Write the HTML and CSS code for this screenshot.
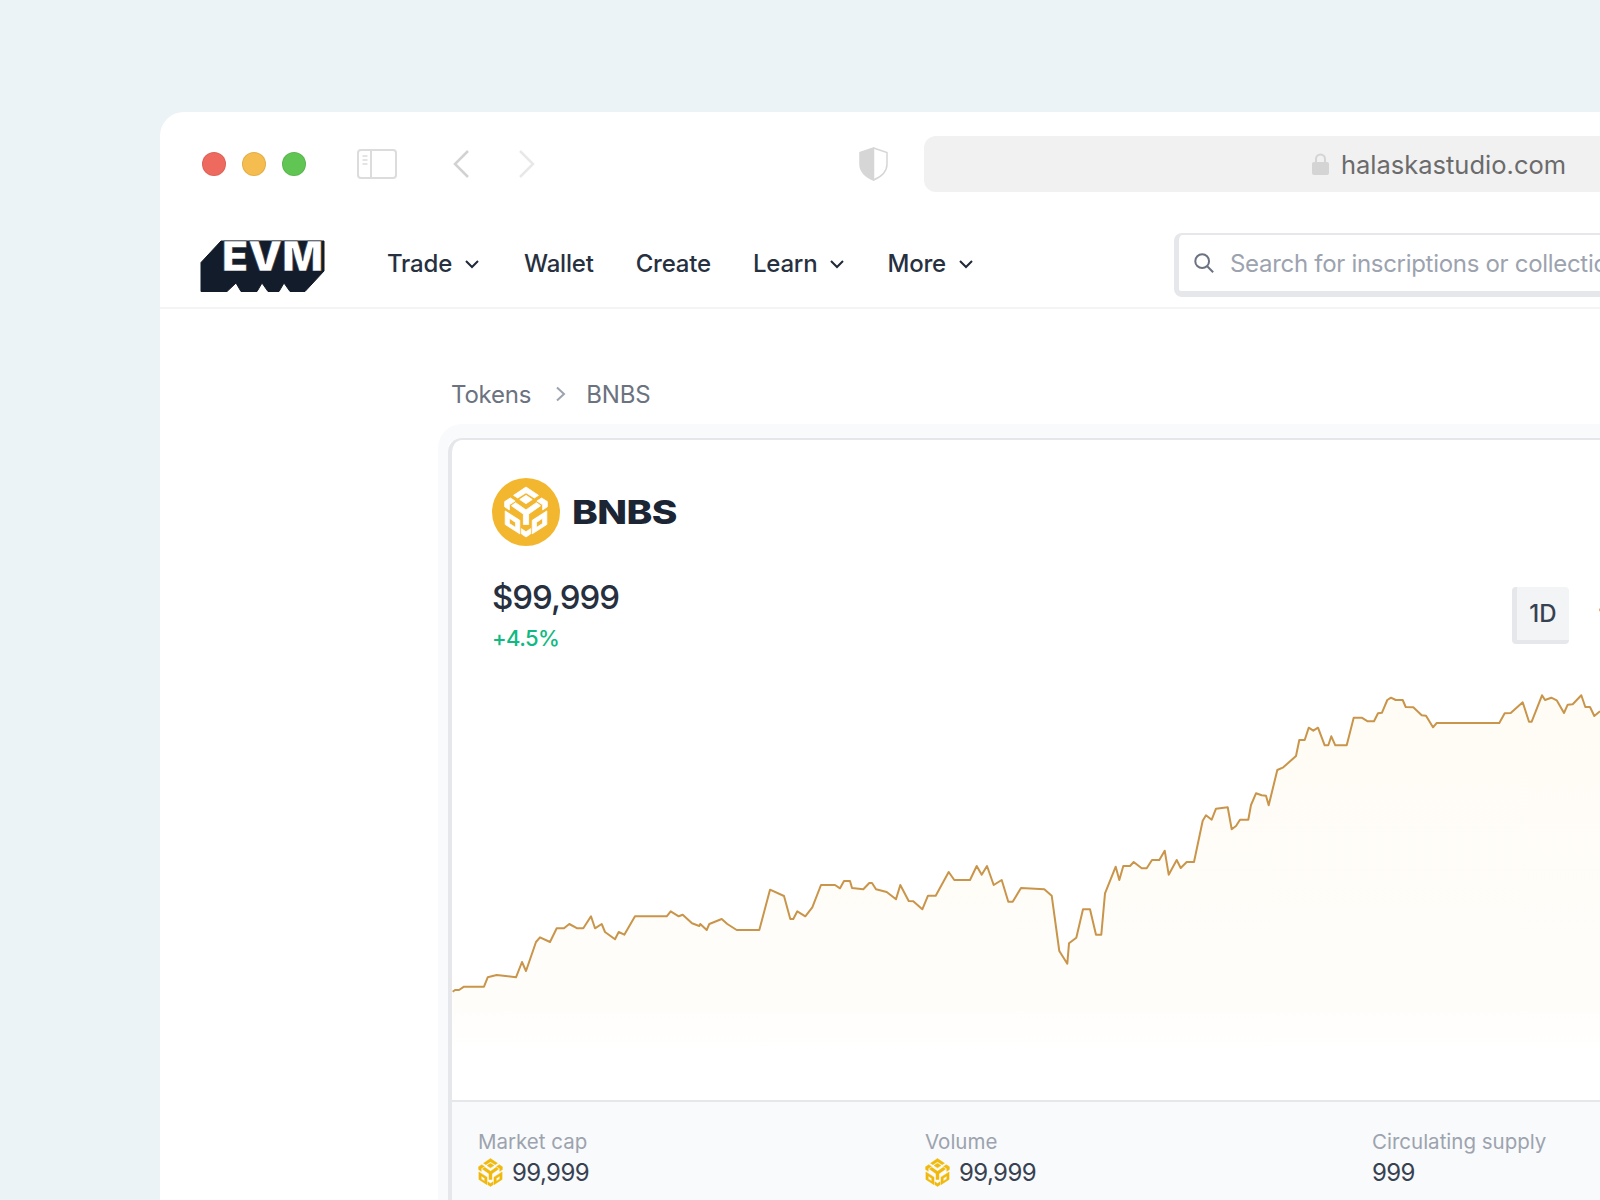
FILE: index.html
```html
<!DOCTYPE HTML>
<html>

<head>
<meta charset="utf-8">
<title>BNBS</title>

<link rel="stylesheet" href="styles.css">
</head>

<body>

<svg class="defs" width="0" height="0">
  <symbol id="bnb-glyph" viewBox="13 8 42 50">
    <path d="M34 9l12 8-4 2.500-8-5-8 5-4-2.500z"/>
    <path d="M34 17l6 4-6 4-6-4z"/>
    <path d="M19 19.500l4.500 3-5.500 3.500v5l-4.500-3v-5z"/>
    <path d="M49 19.500l-4.500 3 5.500 3.500v5l4.500-3v-5z"/>
    <path d="M24 24l10 7 10-7 4 3-11.500 8v10h-5v-10l-11.500-8z"/>
    <path fill-rule="evenodd" d="M14 32l14 9v13l-14-9zM18 39v5l6 4v-5z"/>
    <path fill-rule="evenodd" d="M54 32l-14 9v13l14-9zM50 39v5l-6 4v-5z"/>
    <path d="M29.500 49l4.500 3 4.500-3v5l-4.500 3-4.500-3z"/>
  </symbol>
</svg>

<div class="window">

  <div class="toolbar">
    <span class="light red"></span>
    <span class="light yellow"></span>
    <span class="light green"></span>

    <svg class="sidebar-icon" width="40" height="30" viewBox="0 0 40 30" fill="none" stroke="#dcdcdc" stroke-width="2">
      <rect x="1" y="1" width="38" height="28" rx="3"/>
      <path d="M14 1v28"/>
      <path d="M5.500 7h5M5.500 11h5M5.500 15h5" stroke-width="1.500"/>
    </svg>

    <svg class="back-icon" width="16" height="28" viewBox="0 0 16 28" fill="none" stroke="#d2d2d2" stroke-width="2.500">
      <path d="M15 1L2 14l13 13"/>
    </svg>
    <svg class="forward-icon" width="16" height="28" viewBox="0 0 16 28" fill="none" stroke="#e8e8e8" stroke-width="2.500">
      <path d="M1 1l13 13L1 27"/>
    </svg>

    <svg class="shield-icon" width="29" height="34" viewBox="0 0 29 34">
      <path d="M14.500 1L1 5.500V17c0 7 5 12.500 13.500 16z" fill="#d6d6d6" stroke="#d6d6d6" stroke-width="1.500"/>
      <path d="M14.500 1L28 5.500V17c0 7-5 12.500-13.500 16" fill="none" stroke="#d6d6d6" stroke-width="1.500"/>
    </svg>

    <div class="url-bar">
      <svg width="17" height="22" viewBox="0 0 17 22">
        <rect x="0" y="9" width="17" height="13" rx="2" fill="#d4d4d4"/>
        <path d="M4 10V6a4.500 4.500 0 0 1 9 0v4" fill="none" stroke="#d4d4d4" stroke-width="2"/>
      </svg>
      <span>halaskastudio.com</span>
    </div>
  </div>

  <div class="nav">
    <svg class="logo" width="126" height="53" viewBox="0 0 126 53">
      <path d="M1 22.500L21 1h103v30l-19 20.500H90l-6-8.500-5 8.500H68l-6-8.500-5 8.500H41l-5-8.500-9 8.500H1z" fill="#131c2b" stroke="#131c2b" stroke-linejoin="round"/>
      <text class="logo-text" x="22" y="30.500" textLength="101" lengthAdjust="spacingAndGlyphs">EVM</text>
    </svg>

    <div class="nav-item trade">Trade
      <svg width="16" height="10" viewBox="0 0 16 10" fill="none" stroke="#1f2937" stroke-width="2"><path d="M2 2l6 6 6-6"/></svg>
    </div>
    <div class="nav-item">Wallet</div>
    <div class="nav-item">Create</div>
    <div class="nav-item">Learn
      <svg width="16" height="10" viewBox="0 0 16 10" fill="none" stroke="#1f2937" stroke-width="2"><path d="M2 2l6 6 6-6"/></svg>
    </div>
    <div class="nav-item">More
      <svg width="16" height="10" viewBox="0 0 16 10" fill="none" stroke="#1f2937" stroke-width="2"><path d="M2 2l6 6 6-6"/></svg>
    </div>

    <div class="search">
      <svg width="22" height="22" viewBox="0 0 24 24" fill="none" stroke="#6b7280" stroke-width="2.200">
        <circle cx="10" cy="10" r="7.500"/>
        <path d="M15.500 15.500l6.500 6.500"/>
      </svg>
      <span>Search for inscriptions or collections</span>
    </div>
  </div>

  <div class="content">
    <div class="crumbs">
      <span>Tokens</span>
      <svg width="12" height="16" viewBox="0 0 12 16" fill="none" stroke="#9ca3af" stroke-width="2"><path d="M2 1.500L9 8l-7 6.500"/></svg>
      <span>BNBS</span>
    </div>

    <div class="card-halo">
      <div class="card">
        <div class="token">
          <span class="token-logo">
            <svg width="44" height="52"><use href="#bnb-glyph"/></svg>
          </span>
          <span class="token-name">BNBS</span>
        </div>

        <div class="price-row">
          <div>
            <div class="price">$99,999</div>
            <div class="change">+4.5%</div>
          </div>
          <div class="ranges">
            <button type="button" class="range active">1D</button>
            <button type="button" class="range">1W</button>
          </div>
        </div>

        <svg class="chart" width="1148" height="440" viewBox="452 660 1148 440">
          <defs>
            <linearGradient id="chart-fill" gradientUnits="userSpaceOnUse" x1="0" y1="695" x2="0" y2="1055">
              <stop offset="0" stop-color="#fffcf5"/>
              <stop offset="0.85" stop-color="#fffdfa"/>
              <stop offset="1" stop-color="#ffffff"/>
            </linearGradient>
          </defs>
          <polygon fill="url(#chart-fill)" points="452,1100 452.700,991.700 455,990 459,990 464,986.700 484,986.700 487.700,977.300 496.700,975 516,977.300 522,962 526,971 536,942 540,937.300 550,942 556.700,928.300 564,928.300 569.300,924 577.300,928.300 583.300,928.300 591,916.300 595,928.300 601.700,924 605,932 615,939.300 618.700,932 624.300,934.700 635,916.300 666.700,916.300 670.700,911.300 678.700,916.300 682.700,914.700 692,923.300 699.300,926 700.300,924 706.700,930 709.300,924 721.700,919 727.300,924 736.700,930 759.300,930 770,889.700 784,896 790.300,919 793.300,919 797.300,911.300 805.300,916.300 812.300,907.300 821,885 835,885 840,888.300 844,881 850,881 852,888 863.300,889.300 869.300,883 872,883 876,889.300 886.700,892 896,899.300 900.300,885 908.700,901 913.300,901.300 922.300,909.300 928,895.700 935.700,895.700 948.700,872 954.300,880 970,880 976.700,866 981.700,874.700 987,866 993.700,885 1001.700,880 1008.300,901.700 1012.700,901.700 1021,888 1044.300,889.300 1051.700,895.700 1059.300,951 1067.300,963.700 1069,943.300 1076.300,937.700 1083,909.300 1090,909.300 1096,934.700 1101.300,934.700 1105,893.300 1115.700,866.700 1119.300,880 1123.300,866 1130,866 1133.700,862 1141.700,868.300 1146.700,868.300 1152,860 1159.300,860 1164.700,850.700 1168.700,874.700 1176.700,860 1180.700,868 1186.700,862 1194,862 1202.700,820.700 1206,815.300 1211.700,819.700 1216,808.700 1227.700,807.300 1231.700,829.300 1236,826 1240,819.700 1248.300,819.700 1251,805 1256,793.300 1261.700,795.300 1266,795.700 1268.700,805.300 1277.300,770 1283.300,767.300 1296,756 1299.300,740 1304.700,740 1308.700,727.700 1313.300,730.700 1318,727.700 1324.700,745.300 1328.300,745.300 1331.300,736.300 1335.300,745.300 1346.700,745.300 1353.700,717.700 1361.700,717.700 1367.700,721.300 1374,721.300 1378,713.300 1382,712.700 1387.300,700 1391,697.700 1395.700,700 1402.700,700 1405.700,707 1413.300,707.300 1421.700,715.300 1426,715.700 1433,727.300 1436.700,723 1499.300,723 1504.700,713.300 1510.700,713 1522.700,702.300 1529,721.700 1531.700,721.700 1542,695.300 1545,700 1551.300,697.700 1556.700,700.300 1564,713 1567.700,704.700 1572.700,704.300 1581.300,695.300 1585.300,707 1590,707 1594.300,716 1600,711.300 1600,1100"/>
          <polyline fill="none" stroke="#c9954a" stroke-width="2" stroke-linejoin="round" points="452.700,991.700 455,990 459,990 464,986.700 484,986.700 487.700,977.300 496.700,975 516,977.300 522,962 526,971 536,942 540,937.300 550,942 556.700,928.300 564,928.300 569.300,924 577.300,928.300 583.300,928.300 591,916.300 595,928.300 601.700,924 605,932 615,939.300 618.700,932 624.300,934.700 635,916.300 666.700,916.300 670.700,911.300 678.700,916.300 682.700,914.700 692,923.300 699.300,926 700.300,924 706.700,930 709.300,924 721.700,919 727.300,924 736.700,930 759.300,930 770,889.700 784,896 790.300,919 793.300,919 797.300,911.300 805.300,916.300 812.300,907.300 821,885 835,885 840,888.300 844,881 850,881 852,888 863.300,889.300 869.300,883 872,883 876,889.300 886.700,892 896,899.300 900.300,885 908.700,901 913.300,901.300 922.300,909.300 928,895.700 935.700,895.700 948.700,872 954.300,880 970,880 976.700,866 981.700,874.700 987,866 993.700,885 1001.700,880 1008.300,901.700 1012.700,901.700 1021,888 1044.300,889.300 1051.700,895.700 1059.300,951 1067.300,963.700 1069,943.300 1076.300,937.700 1083,909.300 1090,909.300 1096,934.700 1101.300,934.700 1105,893.300 1115.700,866.700 1119.300,880 1123.300,866 1130,866 1133.700,862 1141.700,868.300 1146.700,868.300 1152,860 1159.300,860 1164.700,850.700 1168.700,874.700 1176.700,860 1180.700,868 1186.700,862 1194,862 1202.700,820.700 1206,815.300 1211.700,819.700 1216,808.700 1227.700,807.300 1231.700,829.300 1236,826 1240,819.700 1248.300,819.700 1251,805 1256,793.300 1261.700,795.300 1266,795.700 1268.700,805.300 1277.300,770 1283.300,767.300 1296,756 1299.300,740 1304.700,740 1308.700,727.700 1313.300,730.700 1318,727.700 1324.700,745.300 1328.300,745.300 1331.300,736.300 1335.300,745.300 1346.700,745.300 1353.700,717.700 1361.700,717.700 1367.700,721.300 1374,721.300 1378,713.300 1382,712.700 1387.300,700 1391,697.700 1395.700,700 1402.700,700 1405.700,707 1413.300,707.300 1421.700,715.300 1426,715.700 1433,727.300 1436.700,723 1499.300,723 1504.700,713.300 1510.700,713 1522.700,702.300 1529,721.700 1531.700,721.700 1542,695.300 1545,700 1551.300,697.700 1556.700,700.300 1564,713 1567.700,704.700 1572.700,704.300 1581.300,695.300 1585.300,707 1590,707 1594.300,716 1600,711.300"/>
        </svg>

        <div class="stats">
          <div class="stat">
            <div class="stat-label">Market cap</div>
            <div class="stat-value"><svg class="coin" width="25" height="29"><use href="#bnb-glyph"/></svg>99,999</div>
          </div>
          <div class="stat">
            <div class="stat-label">Volume</div>
            <div class="stat-value"><svg class="coin" width="25" height="29"><use href="#bnb-glyph"/></svg>99,999</div>
          </div>
          <div class="stat">
            <div class="stat-label">Circulating supply</div>
            <div class="stat-value">999</div>
          </div>
        </div>
      </div>
    </div>
  </div>

</div>

</body>
</html>
```

FILE: styles.css
```css
* {
  box-sizing: border-box;
}

body {
  margin: 0;
  height: 1200px;
  overflow: hidden;
  background-color: #ebf3f6;
  font-family: Inter, "Liberation Sans", sans-serif;
  color: #27303f;
}

svg {
  flex: none;
}

.defs {
  position: absolute;
}

.window {
  width: 1600px;
  height: 1088px;
  margin: 112px 0 0 160px;
  background-color: #fff;
  border-radius: 24px 0 0 0;
  overflow: hidden;
}

/* browser bar */

.toolbar {
  display: flex;
  align-items: center;
  height: 104px;
  padding-left: 42px;
}

.light {
  flex: none;
  width: 24px;
  height: 24px;
  margin-right: 16px;
  border-radius: 50%;
  border: 1px solid rgba(0, 0, 0, .08);
}

.red {
  background-color: #ee6a5f;
}

.yellow {
  background-color: #f5bd4f;
}

.green {
  background-color: #61c554;
}

.sidebar-icon {
  margin-left: 35px;
}

.back-icon {
  margin-left: 56px;
}

.forward-icon {
  margin-left: 50px;
}

.shield-icon {
  margin-left: 324px;
}

.url-bar {
  display: flex;
  align-items: center;
  justify-content: center;
  gap: 12px;
  flex: none;
  width: 1030px;
  height: 56px;
  margin-left: 36px;
  background-color: #f1f1f1;
  border-radius: 12px;
  font-size: 25.500px;
  color: #6b6b6b;
}

/* site nav */

.nav {
  display: flex;
  align-items: center;
  height: 93px;
  padding: 4px 0 0 40px;
  border-bottom: 2px solid #f3f4f6;
}

.logo {
  margin: 5px 61px 0 0;
  overflow: visible;
}

.logo-text {
  font-size: 41px;
  font-weight: 900;
  fill: #fff;
  stroke: #131c2b;
  stroke-width: .5px;
}

.nav-item {
  display: flex;
  align-items: center;
  gap: 12px;
  flex: none;
  margin-right: 42px;
  font-size: 24px;
  font-weight: 500;
  letter-spacing: -.2px;
}

.trade {
  margin-right: 44px;
}

.search {
  display: flex;
  align-items: center;
  gap: 15px;
  flex: none;
  width: 600px;
  height: 64px;
  margin: 3px 0 0 158px;
  padding-left: 14px;
  border: 2px solid #e5e7eb;
  border-left-width: 5px;
  border-bottom-width: 6px;
  border-right: 0;
  border-radius: 8px 0 0 8px;
  font-size: 24px;
  letter-spacing: -.3px;
  color: #9ca3af;
  white-space: nowrap;
}

/* page */

.content {
  padding: 70px 0 0 278px;
}

.crumbs {
  display: flex;
  align-items: center;
  gap: 22px;
  height: 30px;
  padding-left: 13px;
  font-size: 24px;
  letter-spacing: -.2px;
  color: #6b7280;
}

.crumbs svg {
  margin: 0 -3px 0 2px;
}

.card-halo {
  width: 1206px;
  margin-top: 15px;
  border: 10px solid #f9fafb;
  border-top-width: 14px;
  border-right: 0;
  border-radius: 24px 0 0 0;
}

.card {
  border-left: 4px solid #e5e7eb;
  border-top: 2px solid #e5e7eb;
  border-radius: 14px 0 0 0;
  background-color: #fff;
}

.token {
  display: flex;
  align-items: center;
  gap: 12px;
  padding: 38px 0 0 40px;
}

.token-logo {
  display: flex;
  align-items: center;
  justify-content: center;
  width: 68px;
  height: 68px;
  border-radius: 50%;
  background-color: #f3b72f;
  fill: #fff;
  stroke: #fff;
  stroke-width: .8px;
}

.token-name {
  font-size: 33px;
  font-weight: 800;
  letter-spacing: -.5px;
  color: #1b2533;
  transform: scaleX(1.18);
  transform-origin: left center;
}

.price-row {
  display: flex;
  justify-content: space-between;
  height: 114px;
  padding: 30px 0 0 40px;
}

.price {
  font-size: 33px;
  font-weight: 500;
  line-height: 42px;
  letter-spacing: -1px;
}

.change {
  margin-top: 6px;
  font-size: 22px;
  font-weight: 500;
  line-height: 28px;
  letter-spacing: -.6px;
  color: #10b981;
}

.ranges {
  display: flex;
  gap: 18px;
  margin-top: 11px;
  height: 57px;
}

.range {
  width: 57px;
  padding: 0;
  border: 0;
  border-radius: 4px;
  background: none;
  font-family: inherit;
  font-size: 24px;
  font-weight: 500;
  color: #374151;
}

.active {
  background-color: #f3f4f6;
  border-left: 5px solid #e5e7eb;
  border-bottom: 4px solid #e5e7eb;
}

.chart {
  display: block;
}

.stats {
  display: flex;
  height: 100px;
  padding: 27px 0 0 26px;
  border-top: 2px solid #e5e7eb;
  background-color: #f9fafb;
}

.stat {
  flex: none;
  width: 447px;
}

.stat-label {
  font-size: 20.500px;
  line-height: 26px;
  color: #9ca3af;
}

.stat-value {
  display: flex;
  align-items: center;
  gap: 9px;
  height: 34px;
  font-size: 24px;
  letter-spacing: -.6px;
  color: #374151;
}

.coin {
  fill: #f0b90b;
  stroke: #f0b90b;
  stroke-width: .8px;
}
```
